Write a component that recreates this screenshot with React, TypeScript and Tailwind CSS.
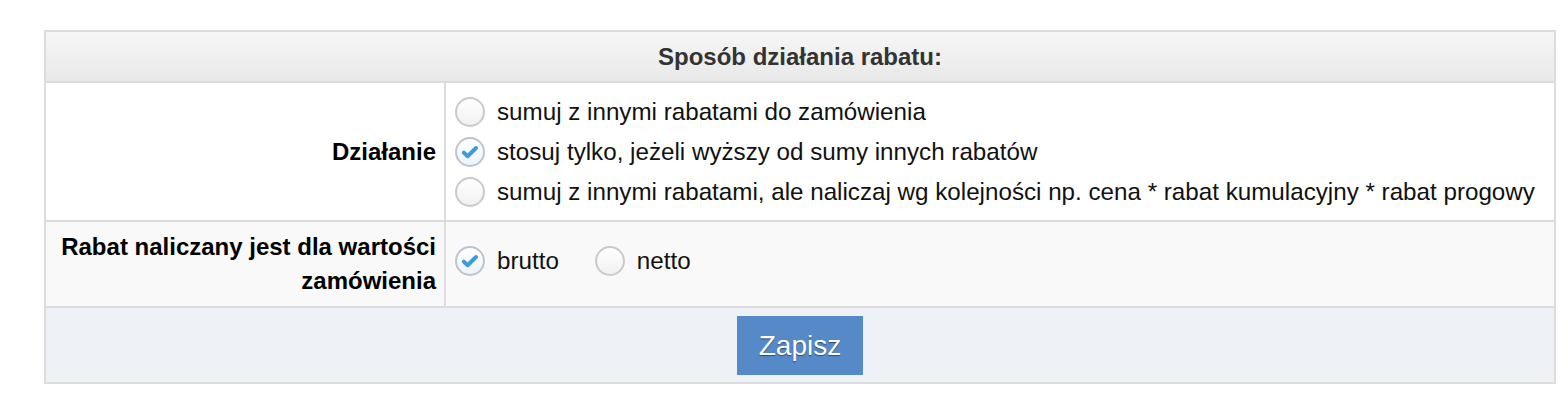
import React from "react";

function Radio({ checked }: { checked?: boolean }) {
  return (
    <span
      className={
        checked
          ? "relative inline-flex h-[30px] w-[30px] shrink-0 items-center justify-center rounded-full border-2 border-[#bcc5ce] bg-gradient-to-b from-[#ffffff] to-[#eef3f8]"
          : "relative inline-flex h-[30px] w-[30px] shrink-0 items-center justify-center rounded-full border-2 border-[#cacaca] bg-gradient-to-b from-[#ffffff] to-[#f1f1f1]"
      }
    >
      {checked && (
        <svg width="30" height="30" viewBox="0 0 30 30" className="absolute left-[-2px] top-[-2px]">
          <path d="M8.8 15.6 L12.6 19.2 L21 11" fill="none" stroke="#3f9bd6" strokeWidth="4" strokeLinecap="round" strokeLinejoin="round" />
        </svg>
      )}
    </span>
  );
}

function Option({ label, checked }: { label: string; checked?: boolean }) {
  return (
    <label className="flex h-[40px] items-center">
      <Radio checked={checked} />
      <span className="ml-[12px] text-[24.2px] leading-[28px] text-[#111]">{label}</span>
    </label>
  );
}

export default function App() {
  return (
    <div className="bg-white pl-[44px] pt-[30px] pb-[16px] w-[1568px]" style={{ fontFamily: '"Liberation Sans", Arial, sans-serif' }}>
      <div className="w-[1512px] border-2 border-[#dcdcdc]">
        <div className="flex h-[51px] items-center justify-center border-b-2 border-[#dcdcdc] bg-gradient-to-b from-[#f6f6f6] to-[#e9e9e9]">
          <span className="text-[24px] font-bold text-[#333]">Sposób działania rabatu:</span>
        </div>
        <div className="flex border-b-2 border-[#dcdcdc] bg-white">
          <div className="flex w-[400px] shrink-0 items-center justify-end border-r-2 border-[#dcdcdc] pr-[8px]">
            <span className="text-[24px] font-bold text-black">Działanie</span>
          </div>
          <div className="flex flex-col pt-[9px] pb-[8px] pl-[9px]">
            <Option label="sumuj z innymi rabatami do zamówienia" />
            <Option label="stosuj tylko, jeżeli wyższy od sumy innych rabatów" checked />
            <Option label="sumuj z innymi rabatami, ale naliczaj wg kolejności np. cena * rabat kumulacyjny * rabat progowy" />
          </div>
        </div>
        <div className="flex border-b-2 border-[#dcdcdc] bg-[#f9f9f9]">
          <div className="flex w-[400px] shrink-0 items-center justify-end border-r-2 border-[#dcdcdc] pr-[8px] py-[8px]">
            <span className="text-right text-[24px] font-bold leading-[34px] text-black">
              Rabat naliczany jest dla wartości
              <br />
              zamówienia
            </span>
          </div>
          <div className="flex items-center pl-[9px] pb-[6px]">
            <Option label="brutto" checked />
            <div className="ml-[36px]">
              <Option label="netto" />
            </div>
          </div>
        </div>
        <div className="flex justify-center bg-[#eef2f7] pt-[8px] pb-[7px]">
          <button className="h-[59px] w-[126px] bg-[#5589c7] text-[28px] text-white" style={{ textShadow: "0 1px 1px rgba(0,0,0,0.45)" }}>
            Zapisz
          </button>
        </div>
      </div>
    </div>
  );
}
